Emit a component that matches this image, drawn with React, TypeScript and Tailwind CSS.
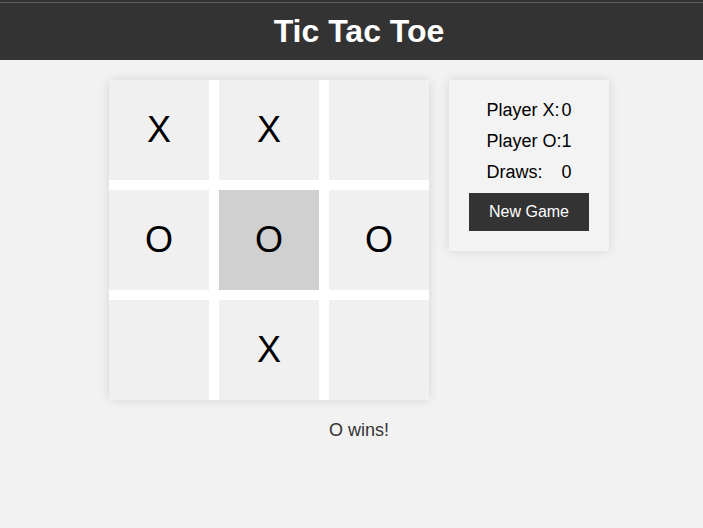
import React from "react";

const cells = ["X", "X", "", "O", "O", "O", "", "X", ""];
const highlighted = 4;

const App: React.FC = () => {
  const scores = [
    { label: "Player X:", value: 0 },
    { label: "Player O:", value: 1 },
    { label: "Draws:", value: 0 },
  ];

  return (
    <div
      className="min-h-[528px] bg-[#f2f2f2] pl-[15px] text-[#333]"
      style={{ fontFamily: '"Liberation Sans", Arial, sans-serif' }}
    >
      {/* Header */}
      <header className="-ml-[15px] h-[60px] bg-[#333] pl-[15px]">
        <div className="h-[2px]" />
        <div className="-ml-[15px] h-px bg-[#5c5c5c]" />
        <h1 className="pt-[10px] text-center text-[32px] font-bold leading-[36px] text-white">
          Tic Tac Toe
        </h1>
      </header>

      {/* Game */}
      <div className="mx-auto mt-5 flex w-[500px] items-start gap-5">
        <div className="grid grid-cols-[repeat(3,100px)] gap-[10px] bg-white shadow-[0_0_10px_rgba(0,0,0,0.12)]">
          {cells.map((c, i) => (
            <div
              key={i}
              className={`flex h-[100px] w-[100px] items-center justify-center text-[36px] text-black ${
                i === highlighted ? "bg-[#d0d0d0]" : "bg-[#f0f0f0]"
              }`}
            >
              {c}
            </div>
          ))}
        </div>

        {/* Scoreboard */}
        <div className="w-[160px] bg-[#f3f3f3] px-5 pt-[15px] pb-5 shadow-[0_0_10px_rgba(0,0,0,0.12)]">
          <div className="mx-auto flex w-fit flex-col text-[18px] leading-[31px] text-black">
            {scores.map((s) => (
              <div key={s.label} className="flex justify-between">
                <span>{s.label}</span>
                <span>{s.value}</span>
              </div>
            ))}
          </div>
          <button className="mt-[5px] h-[38px] w-[120px] bg-[#333] text-[16px] text-white">
            New Game
          </button>
        </div>
      </div>

      {/* Status */}
      <div className="mx-auto mt-[19px] w-[500px] text-center text-[18px] leading-[22px] text-[#333]">
        O wins!
      </div>
    </div>
  );
};

export default App;
